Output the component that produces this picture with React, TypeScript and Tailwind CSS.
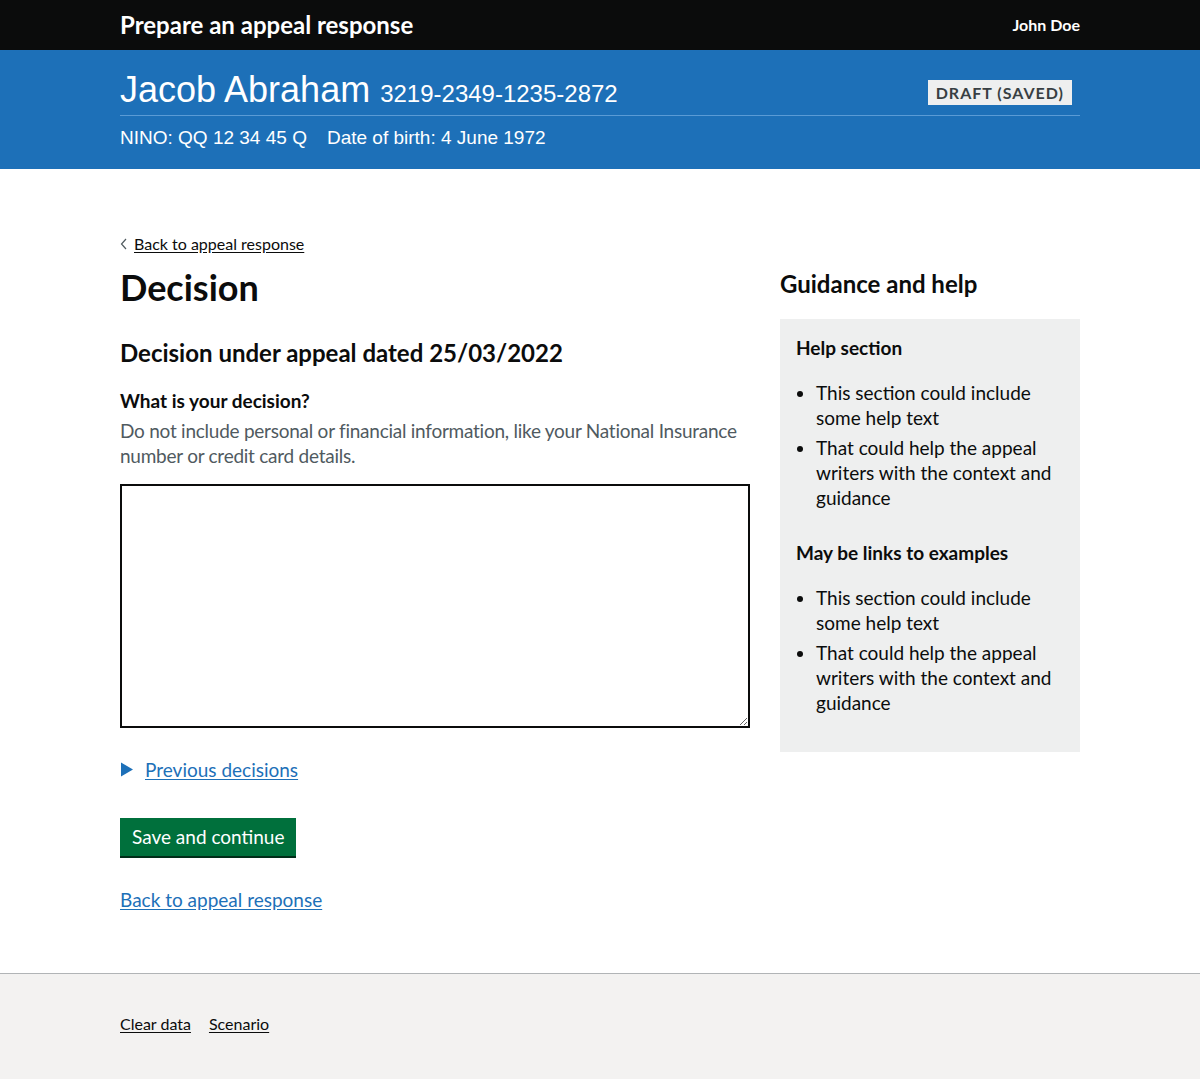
import { useState } from "react"

const font = { fontFamily: "Lato, 'Noto Sans', sans-serif" }

function HelpList({ items }: { items: string[] }) {
  return (
    <ul className="mt-[20px] list-disc pl-[20px] text-[19px] leading-[25px] text-[#0b0c0c]">
      {items.map((item, i) => (
        <li key={i} className="mb-[5px]">
          {item}
        </li>
      ))}
    </ul>
  )
}

export default function App() {
  const [value, setValue] = useState("")
  const items = [
    "This section could include some help text",
    "That could help the appeal writers with the context and guidance",
  ]

  return (
    <div className="min-h-[1079px] flex flex-col bg-white text-[#0b0c0c]" style={font}>
      {/* top bar */}
      <header className="bg-[#0b0c0c] h-[50px]">
        <div className="mx-auto w-[960px] h-full flex items-center justify-between">
          <span className="text-white font-bold text-[24px] leading-none">Prepare an appeal response</span>
          <span className="text-white font-bold text-[16px] leading-none">John Doe</span>
        </div>
      </header>

      {/* claimant banner */}
      <div className="bg-[#1d70b8] h-[119px]" style={{ fontFamily: "'Liberation Sans', Arial, sans-serif" }}>
        <div className="mx-auto w-[960px] pt-[20px]">
          <div className="flex items-end justify-between border-b border-[#5a9bd5] pb-[5px]">
            <div className="text-white flex items-baseline gap-[10px]">
              <span className="text-[36px] leading-[40px]">Jacob Abraham</span>
              <span className="text-[24px] leading-[30px]">3219-2349-1235-2872</span>
            </div>
            <span
              className="mr-[8px] mb-[5px] bg-[#eeefef] text-[#383f43] font-bold text-[16px] leading-[25px] px-[8px] tracking-[1px] uppercase"
              style={font}
            >
              Draft (saved)
            </span>
          </div>
          <div className="text-white text-[19px] leading-[25px] pt-[9px] flex gap-[20px]">
            <span>NINO: QQ 12 34 45 Q</span>
            <span>Date of birth: 4 June 1972</span>
          </div>
        </div>
      </div>

      {/* main */}
      <main className="flex-1 mx-auto w-[960px] pt-[63px] pb-[60px]">
        <a href="#" className="inline-flex items-center gap-[5px] text-[16px] leading-[20px] text-[#0b0c0c] underline underline-offset-2">
          <svg width="8" height="12" viewBox="0 0 8 12" className="mr-[1px]">
            <path d="M6 1 L1.5 6 L6 11" fill="none" stroke="#505a5f" strokeWidth="1.2" />
          </svg>
          Back to appeal response
        </a>

        <div className="flex gap-[30px] mt-[11px]">
          <div className="w-[630px]">
            <h1 className="font-bold text-[36px] leading-[40px] mb-[31px]">Decision</h1>
            <h2 className="font-bold text-[24px] leading-[30px] mb-[20px]">Decision under appeal dated 25/03/2022</h2>
            <label htmlFor="decision" className="block font-bold text-[19px] leading-[25px] mb-[5px]">
              What is your decision?
            </label>
            <div className="text-[19px] leading-[25px] text-[#505a5f] mb-[16px] tracking-[-0.25px]">
              Do not include personal or financial information, like your National Insurance number or credit card details.
            </div>
            <textarea
              id="decision"
              value={value}
              onChange={(e) => setValue(e.target.value)}
              className="block w-[630px] h-[244px] border-2 border-[#0b0c0c] p-[5px] text-[19px] outline-none"
            />

            <div className="mt-[29px] flex items-center gap-[10px] text-[19px] leading-[25px]">
              <svg width="15" height="15" viewBox="0 0 15 15">
                <path d="M1 0.5 L13 7.5 L1 14.5 Z" fill="#1d70b8" />
              </svg>
              <a href="#" className="text-[#1d70b8] underline underline-offset-2">Previous decisions</a>
            </div>

            <button className="mt-[36px] bg-[#00703c] text-white text-[19px] leading-[19px] px-[12px] pt-[9px] pb-[10px] shadow-[0_2px_0_#002d18]">
              Save and continue
            </button>

            <div className="mt-[31px]">
              <a href="#" className="text-[19px] leading-[25px] text-[#1d70b8] underline underline-offset-2">
                Back to appeal response
              </a>
            </div>
          </div>

          <aside className="w-[300px] pt-[2px]">
            <h2 className="font-bold text-[24px] leading-[30px] mb-[20px]">Guidance and help</h2>
            <div className="bg-[#eeefef] px-[16px] pt-[16px] pb-[32px]">
              <h3 className="font-bold text-[19px] leading-[25px]">Help section</h3>
              <HelpList items={items} />
              <h3 className="font-bold text-[19px] leading-[25px] mt-[30px]">May be links to examples</h3>
              <HelpList items={items} />
            </div>
          </aside>
        </div>
      </main>

      {/* footer */}
      <footer className="bg-[#f3f2f1] border-t border-[#b1b4b6] h-[106px]">
        <div className="mx-auto w-[960px] pt-[40px] flex gap-[18px] text-[16px] leading-[20px]">
          <a href="#" className="underline underline-offset-2 text-[#0b0c0c]">Clear data</a>
          <a href="#" className="underline underline-offset-2 text-[#0b0c0c]">Scenario</a>
        </div>
      </footer>
    </div>
  )
}
